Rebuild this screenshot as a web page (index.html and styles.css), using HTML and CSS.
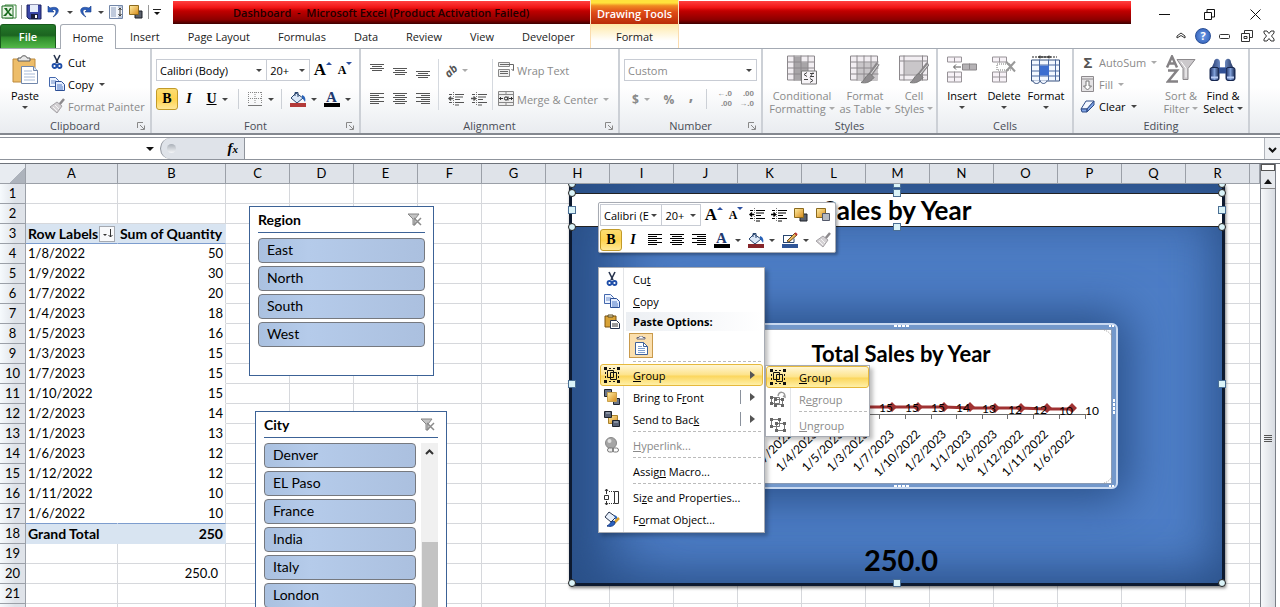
FILE: index.html
```html
<!DOCTYPE html>
<html lang="en">
<head>
    <meta charset="UTF-8">
    <meta name="viewport" content="width=device-width, initial-scale=1.0">
    <title>Dashboard - Microsoft Excel</title>
    <link rel="stylesheet" href="styles.css">
</head>
<body>
    <!-- Icon sprite -->
    <svg class="sprite" aria-hidden="true">
        <defs>
            <linearGradient id="gold" x1="0" y1="0" x2="1" y2="1"><stop offset="0" stop-color="#fff0a8"/><stop offset="1" stop-color="#d88a18"/></linearGradient>
            <linearGradient id="steel" x1="0" y1="0" x2="1" y2="0"><stop offset="0" stop-color="#1c2f66"/><stop offset=".5" stop-color="#7f9fd8"/><stop offset="1" stop-color="#16264f"/></linearGradient>
        </defs>
        <symbol id="i-excel" viewBox="0 0 16 16"><path d="M4 1h11v13H4z" fill="#fff" stroke="#3c8a3c"/><path d="M1 2h11v12H1z" fill="#e8f4e4" stroke="#1d6a22"/><path d="M3 4h3l1 3 2-3h2L8 8l4 4H9L7 9l-2 3H2l4-4z" fill="#176a1c"/></symbol>
        <symbol id="i-save" viewBox="0 0 16 16"><path d="M1 1h14v14H3l-2-2z" fill="#3b47a8" stroke="#1c2260"/><path d="M4 1h8v7H4z" fill="#e6ecfa"/><path d="M5 10h7v5H5z" fill="#191d3d"/><path d="M9 11h2v3H9z" fill="#fff"/></symbol>
        <symbol id="i-undo" viewBox="0 0 16 16"><path d="M2 2v6h6L6 6c4-2 6 2 1 7 8-4 7-12-3-9z" fill="#2c5fbd" stroke="#173d86" stroke-width=".6"/></symbol>
        <symbol id="i-redo" viewBox="0 0 16 16"><path d="M14 2v6H8l2-2c-4-2-6 2-1 7-8-4-7-12 3-9z" fill="#2c5fbd" stroke="#173d86" stroke-width=".6"/></symbol>
        <symbol id="i-ruler" viewBox="0 0 16 16"><path d="M1.500 1.500h13v13h-13z" fill="#f4f7fb" stroke="#7387a8"/><path d="M3 4h5M3 6h5M3 8h5M3 10h5M3 12h5M10 3h4M10 13h4" stroke="#8a9cbc"/><path d="M12 4v8M10.500 6L12 4l1.500 2M10.500 10l1.500 2 1.500-2" stroke="#333" fill="none"/></symbol>
        <symbol id="i-front" viewBox="0 0 16 16"><path d="M7 7h7v7H7z" fill="#5a606c" stroke="#1d2028"/><path d="M1.500 1.500h9v9h-9z" fill="url(#gold)" stroke="#8b6a1e"/></symbol>
        <symbol id="i-back" viewBox="0 0 16 16"><path d="M1.500 1.500h9v9h-9z" fill="url(#gold)" stroke="#8b6a1e"/><path d="M7.500 6.500h7v7h-7z" fill="#b5b9c1" stroke="#53596a"/></symbol>
        <symbol id="i-mfront" viewBox="0 0 16 16"><path d="M.5.5h7v7h-7zM9.500 9.500h6v6h-6z" fill="#6a7385" stroke="#1f242e"/><path d="M3.500 3.500h9v9h-9z" fill="url(#gold)" stroke="#c9a14a"/></symbol>
        <symbol id="i-mback" viewBox="0 0 16 16"><path d="M4.500 4.500h9v8h-9z" fill="url(#gold)" stroke="#a9812a"/><path d="M.5.5h7v6h-7zM8.500 9.500h7v6h-7z" fill="#596275" stroke="#1f242e"/><path d="M2 2h4M10 11h4" stroke="#b8c0cf"/></symbol>
        <symbol id="i-paste" viewBox="0 0 28 30"><path d="M2 4h22v23H2z" fill="#edbd6a" stroke="#bd8a3c"/><path d="M7 6V3h3c0-3 6-3 6 0h3v3z" fill="#e9e9e9" stroke="#5d5d5d"/><path d="M10.500 11.500h12l4 4v13h-16z" fill="#fff" stroke="#7187ab"/><path d="M22.500 11.500v4h4" fill="#dce6f4" stroke="#7187ab"/><path d="M13 16h8M13 19h11M13 22h11M13 25h11" stroke="#a8bbd8"/></symbol>
        <symbol id="i-cut" viewBox="0 0 16 16"><path d="M5 1l4 8M11 1L7 9" stroke="#26334d" stroke-width="1.600"/><circle cx="5.500" cy="12" r="2" fill="none" stroke="#1f4ea8" stroke-width="1.800"/><circle cx="10.500" cy="12" r="2" fill="none" stroke="#1f4ea8" stroke-width="1.800"/></symbol>
        <symbol id="i-copy" viewBox="0 0 16 16"><path d="M.5 1.500h6l3 3v6h-9z" fill="#eef4ff" stroke="#4468ad"/><path d="M2 5h5M2 7h5" stroke="#6f90cc"/><path d="M6.500 5.500h6l3 3v6h-9z" fill="#e4edff" stroke="#2c4f96"/><path d="M8 9h5M8 11h6M8 13h6" stroke="#4f78c4"/></symbol>
        <symbol id="i-brush" viewBox="0 0 16 16"><path d="M15 1l-5 6" stroke="#8d8a8d" stroke-width="2.500"/><path d="M8 4l5 4-5 7-7-6z" fill="#d4d1d4" stroke="#a5a2a6"/><path d="M4 9l4 4M6 7l4 4" stroke="#f4f4f4"/></symbol>
        <symbol id="i-border" viewBox="0 0 16 16"><path d="M1.500 1v12M8 1v12M14.500 1v12M1 1.500h14M1 7.500h14" stroke="#888" stroke-dasharray="1 1"/><path d="M1 14.500h14" stroke="#777"/></symbol>
        <symbol id="i-bucket" viewBox="0 0 16 12"><path d="M6 2l7 5-6 5-6-5z" fill="#dce8f8" stroke="#28456f"/><path d="M5 5V1.500h3V6" fill="none" stroke="#28456f"/><path d="M12 4c3 1 4 4 3 7-1-2-2-3-3-4z" fill="#2862b8"/></symbol>
        <symbol id="i-pen" viewBox="0 0 16 12"><path d="M1 3.500h10M1.500 3v8M1 10.500h11v-4" fill="none" stroke="#28456f"/><path d="M5 9L13 1l2 2-8 7z" fill="#e8b65a" stroke="#6a4a20"/><path d="M13 1l2 2" stroke="#b33" stroke-width="2"/></symbol>
        <symbol id="i-top" viewBox="0 0 16 16"><path d="M1 2.500h14M3 4.500h10M1 6.500h14M3 8.500h10" stroke="currentColor"/></symbol>
        <symbol id="i-mid" viewBox="0 0 16 16"><path d="M1 6.500h14M3 8.500h10M1 10.500h14M3 12.500h10" stroke="currentColor"/></symbol>
        <symbol id="i-bottom" viewBox="0 0 16 16"><path d="M1 9.500h14M3 11.500h10M1 13.500h14M3 15.500h10" stroke="currentColor"/></symbol>
        <symbol id="i-left" viewBox="0 0 16 16"><path d="M1 2.500h14M1 4.500h9M1 6.500h14M1 8.500h9M1 10.500h14M1 12.500h9" stroke="currentColor"/></symbol>
        <symbol id="i-center" viewBox="0 0 16 16"><path d="M1 2.500h14M3 4.500h10M1 6.500h14M3 8.500h10M1 10.500h14M3 12.500h10" stroke="currentColor"/></symbol>
        <symbol id="i-right" viewBox="0 0 16 16"><path d="M1 2.500h14M6 4.500h9M1 6.500h14M6 8.500h9M1 10.500h14M6 12.500h9" stroke="currentColor"/></symbol>
        <symbol id="i-outdent" viewBox="0 0 16 16"><path d="M1 3.500h3M7 3.500h9M7 6h8M7 8.500h5M1 11.500h3M7 11.500h9M7 14h4" stroke="currentColor"/><path d="M5.500 1v14" stroke="#777" stroke-dasharray="1 1"/><path d="M5 7.500H1M3 5.500l-2 2 2 2" fill="none" stroke="currentColor" stroke-width="1.500"/></symbol>
        <symbol id="i-indent" viewBox="0 0 16 16"><path d="M1 3.500h3M7 3.500h9M7 6h8M7 8.500h5M1 11.500h3M7 11.500h9M7 14h4" stroke="currentColor"/><path d="M5.500 1v14" stroke="#777" stroke-dasharray="1 1"/><path d="M0 7.500h4M2.500 5.500l2 2-2 2" fill="none" stroke="currentColor" stroke-width="1.500"/></symbol>
        <symbol id="i-wrap" viewBox="0 0 16 16"><path d="M.5.5h11v4H.5zM.5 7.500h11v7H.5z" fill="#eee" stroke="#888"/><path d="M2 2.500h13.500v6M2 9.500h8M2 11.500h8M13.500 7l2 2" fill="none" stroke="#666"/></symbol>
        <symbol id="i-merge" viewBox="0 0 16 16"><path d="M.5.500h15v14H.5zM.5 3.500h15M.5 11.500h15M8 0v4M8 12v3" fill="#eee" stroke="#888"/><path d="M1 7.500h4M11 7.500h4M3 6L1.500 7.500 3 9M13 6l1.500 1.500L13 9" fill="none" stroke="#333"/><circle cx="8" cy="7.500" r="1.600" fill="none" stroke="#222"/><path d="M10 5.500v4" stroke="#222"/></symbol>
        <symbol id="i-cond" viewBox="0 0 30 29"><path d="M.5.500h27v24H.5z" fill="#f2eef2" stroke="#8c888c"/><path d="M7 1h7v24H7zM14 7h7v11h-7z" fill="#a8a5a8"/><path d="M.5 6.500h27M.5 12.500h27M.5 18.500h27M7 0v25M14 0v25M21 0v25" stroke="#8c888c"/><path d="M14.500 15.500h15v13h-15z" fill="#f7f4f7" stroke="#777"/><path d="M20 17l-3 2 3 2M17 24h4M23 18h4M23 21h4M26 17l-3 5M23 23l3 2-3 2" fill="none" stroke="#444"/></symbol>
        <symbol id="i-ftable" viewBox="0 0 30 29"><path d="M.5.500h27v24H.5z" fill="#f2eef2" stroke="#8c888c"/><path d="M7 7h21v18H7z" fill="#c9c6c9"/><path d="M.5 6.500h28M.5 12.500h28M.5 18.500h28M7 0v25M14 0v25M21 0v25" stroke="#8c888c"/><path d="M28 8l-9 13" stroke="#8a878a" stroke-width="4"/><path d="M28 9l-9 12" stroke="#ddd"/><path d="M20 18l4 4c-4 5-8 6-13 5 4-2 4-7 9-9z" fill="#8f8c8f" stroke="#777"/></symbol>
        <symbol id="i-cstyle" viewBox="0 0 30 29"><path d="M.5.500h28v24H.5z" fill="#f2eef2" stroke="#8c888c"/><path d="M5 6h18v13H5z" fill="#c9c6c9"/><path d="M.5 5.500h28M.5 19.500h28M5 0v25M23.500 0v25" stroke="#8c888c"/><path d="M29 8L19 21" stroke="#8a878a" stroke-width="4"/><path d="M29 9L19 21" stroke="#ddd"/><path d="M20 18l4 4c-4 5-8 6-13 5 4-2 4-7 9-9z" fill="#8f8c8f" stroke="#777"/></symbol>
        <symbol id="i-insert" viewBox="0 0 30 29"><path d="M.5 1.500h14v5H.5zM7.500 2v5M.5 16.500h14v10H.5zM7.500 16v10M.5 21.500h14" fill="#f7f2f7" stroke="#979297"/><path d="M15.500 8.500h14v6h-14zM22.500 8v6" fill="#b5b2b5" stroke="#8a878a"/><path d="M14 11.500H7M9 9l-2.500 2.500L9 14" stroke="#555" fill="none"/></symbol>
        <symbol id="i-delete" viewBox="0 0 30 29"><path d="M3.500 1.500h14v5h-14zM10.500 2v5M3.500 16.500h14v10h-14zM10.500 16v10M3.500 21.500h14" fill="#f7f2f7" stroke="#979297"/><path d="M8 8.500h14v6H8z" fill="none" stroke="#777" stroke-dasharray="1 1"/><path d="M17 6l9 10M26 6l-9 10" stroke="#999" stroke-width="2"/></symbol>
        <symbol id="i-format" viewBox="0 0 30 29"><path d="M1 1.500h25" stroke="#222" stroke-dasharray="2 1"/><path d="M7 1.500h13M9 0v3M18 0v3" stroke="#222"/><path d="M.5 4.500h28v21H.5z" fill="#f3f8ff" stroke="#37517f"/><path d="M2 25c0 4 7 4 7 0 1 4 6 4 7 0" fill="#eef4ff" stroke="#37517f"/><path d="M.5 9.500h28M.5 15.500h28M.5 20.500h28M8.500 4v21M17.500 4v21M24.500 4v21" stroke="#4a69a0"/><path d="M9 10h9v10H9z" fill="#3c6ed0"/></symbol>
        <symbol id="i-fill" viewBox="0 0 16 16"><path d="M1.500.500h12v15h-12z" fill="#e5e3e5" stroke="#8e8b8e"/><path d="M1 3h12" stroke="#8e8b8e"/><path d="M6 5h3v5h2.500l-4 4-4-4H6z" fill="#fff" stroke="#777"/></symbol>
        <symbol id="i-eraser" viewBox="0 0 16 16"><path d="M6 3h8l-7 8H1z" fill="#f3f7ff" stroke="#304d87"/><path d="M1 11h6v3H2zM7 11l7-8v4l-7 7z" fill="#7ea3e6" stroke="#304d87"/></symbol>
        <symbol id="i-sort" viewBox="0 0 30 29"><path d="M1 12L6 1l5 11M3 8h6M2 15h9L2 26h10" fill="none" stroke="#858285" stroke-width="2.500"/><path d="M11 4h18l-7 9v11h-5V13z" fill="#cbc8cb" stroke="#8b888b"/><path d="M15 6l5 7v9" fill="none" stroke="#fff"/></symbol>
        <symbol id="i-find" viewBox="0 0 30 29"><path d="M6 7c0-5 6-5 6 0v5h5V7c0-5 6-5 6 0l4 9H2z" fill="url(#steel)"/><rect x="2" y="12" width="9" height="13" rx="2" fill="url(#steel)" stroke="#16264f"/><rect x="18" y="12" width="9" height="13" rx="2" fill="url(#steel)" stroke="#16264f"/><path d="M11 12h7v6h-7z" fill="#304f94"/><path d="M3 22h7M19 22h7" stroke="#b8ccf5" stroke-width="2"/></symbol>
        <symbol id="i-launch" viewBox="0 0 8 8"><path d="M.5 6V.500H6M3 3l4 4M7.500 3.500v4h-4" fill="none" stroke="currentColor"/></symbol>
        <symbol id="i-clear" viewBox="0 0 16 14"><path d="M1 1h11L8 6v6H6V6z" fill="#c4c4c4" stroke="#858585"/><path d="M7 5l7 7M14 5l-7 7" stroke="#8b8b8b" stroke-width="1.500"/></symbol>
        <symbol id="i-group" viewBox="0 0 16 16"><path d="M3.500 3.500h6v7h-6zM6.500 5.500h6v7h-6z" fill="none" stroke="#111"/><path d="M0 0h3v3H0zM13 0h3v3h-3zM0 13h3v3H0zM13 13h3v3h-3z" fill="#111"/><path d="M5 1.500h2M9 1.500h2M5 14.500h2M9 14.500h2M1.500 5v2M1.500 9v2M14.500 5v2M14.500 9v2" stroke="#111"/></symbol>
        <symbol id="i-ungroup" viewBox="0 0 16 16"><path d="M1.500 2.500h8v7h-8zM6.500 6.500h8v7h-8z" fill="none" stroke="#777"/><path d="M0 1h3v3H0zM8 1h3v3H8zM0 8h3v3H0zM5 5h3v3H5zM13 5h3v3h-3zM5 12h3v3H5zM13 12h3v3h-3z" fill="#666"/></symbol>
        <symbol id="i-regroup" viewBox="0 0 16 16"><path d="M1.500 6.500h8v6h-8zM4.500 8.500h8v5h-8z" fill="none" stroke="#777"/><path d="M0 5h3v3H0zM0 11h3v3H0zM4 7h3v3H4zM11 7h3v3h-3zM4 13h3v3H4zM11 13h3v3h-3z" fill="#666"/><path d="M8 5c1-5 7-5 7 1l-2-1" fill="none" stroke="#999" stroke-width="1.500"/></symbol>
        <symbol id="i-link" viewBox="0 0 16 16"><circle cx="7" cy="6" r="5.500" fill="#a5a5a5" stroke="#888"/><circle cx="5.500" cy="4" r="2" fill="#e0e0e0"/><rect x="3.500" y="11" width="6" height="4" rx="2" fill="#eee" stroke="#777"/><rect x="8.500" y="11" width="6" height="4" rx="2" fill="none" stroke="#777"/></symbol>
        <symbol id="i-size" viewBox="0 0 16 16"><path d="M10.500 2.500h4v12h-4z" fill="#fff" stroke="#333"/><path d="M.5 6.500h4v4h-4z" fill="none" stroke="#333"/><path d="M2.500 0v5M2.500 12v4M1 2l1.500-2L4 2M1 14l1.500 2L4 14" stroke="#333" fill="none"/><path d="M5 2.500h5M5 14.500h5" stroke="#333" stroke-dasharray="1 1"/></symbol>
        <symbol id="i-fobj" viewBox="0 0 16 16"><path d="M5 1l7 5-5 5-6-5z" fill="#e8f0fb" stroke="#26334d"/><path d="M10 4c4 1 4 4 2 6z" fill="#2862b8"/><path d="M15 7l-5 5" stroke="#d9a02b" stroke-width="2.500"/><path d="M11 11c0 4-4 5-8 4 3-1 3-4 6-5z" fill="#2c62c0" stroke="#173d86"/></symbol>
        <symbol id="i-mpaste" viewBox="0 0 16 16"><path d="M1 2h11v11H1z" fill="#d9a336" stroke="#7a5310"/><path d="M4 3V1h5v2z" fill="#f4e8c8" stroke="#5b4a1e"/><path d="M6.500 6.500h6l3 3v5h-9z" fill="#fff" stroke="#26334d"/><path d="M8 10h6M8 12h6" stroke="#333"/></symbol>
    </svg>

    <div class="window">
        <header class="top-bar">
            <div class="title-left">
                <div class="quick-access">
                    <svg class="icon"><use href="#i-excel"/></svg>
                    <i class="quick-line"></i>
                    <button class="tool" aria-label="Save"><svg class="icon"><use href="#i-save"/></svg></button>
                    <button class="tool" aria-label="Undo"><svg class="icon"><use href="#i-undo"/></svg><i class="caret"></i></button>
                    <button class="tool" aria-label="Redo"><svg class="icon"><use href="#i-redo"/></svg><i class="caret"></i></button>
                    <button class="tool" aria-label="Row height"><svg class="icon"><use href="#i-ruler"/></svg></button>
                    <button class="tool" aria-label="Bring to front"><svg class="icon"><use href="#i-front"/></svg></button>
                    <i class="quick-line"></i>
                    <button class="customize" aria-label="Customize toolbar"><i class="caret"></i></button>
                </div>
                <div class="title-text">Dashboard&nbsp; -&nbsp; Microsoft Excel (Product Activation Failed)</div>
            </div>
            <div class="context-title">Drawing Tools</div>
            <div class="title-right">
                <div class="title-fill"></div>
                <div class="window-buttons">
                    <button class="tool" aria-label="Minimize"><svg width="11" height="11"><path d="M0 5.500h11" stroke="#111"/></svg></button>
                    <button class="tool" aria-label="Restore"><svg width="11" height="11"><path d="M.5 3.500h7v7h-7zM3 3V.500h7.500V8H8" fill="none" stroke="#111"/></svg></button>
                    <button class="tool" aria-label="Close"><svg width="11" height="11"><path d="M.5.500l10 10M10.500.500l-10 10" stroke="#111"/></svg></button>
                </div>
            </div>
        </header>

        <nav class="tab-bar">
            <div class="tabs">
                <button class="tab file-tab">File</button>
                <button class="tab active">Home</button>
                <button class="tab">Insert</button>
                <button class="tab">Page Layout</button>
                <button class="tab">Formulas</button>
                <button class="tab">Data</button>
                <button class="tab">Review</button>
                <button class="tab">View</button>
                <button class="tab">Developer</button>
            </div>
            <button class="tab context-tab">Format</button>
            <div class="doc-buttons">
                <button class="tool" aria-label="Collapse ribbon"><svg width="10" height="8"><path d="M1 4l4-3 4 3v2L5 3.500 1 6z" fill="#fff" stroke="#333"/></svg></button>
                <button class="help" aria-label="Help">?</button>
                <button class="tool" aria-label="Minimize workbook"><svg width="12" height="12"><rect x=".5" y="4.500" width="10" height="4" rx="1" fill="#fff" stroke="#333"/></svg></button>
                <button class="tool" aria-label="Restore workbook"><svg width="12" height="12"><path d="M3.500 3V.500h8v7H9M.5 3.500h8v8h-8zM3 6.500h3v2H3z" fill="none" stroke="#333"/></svg></button>
                <button class="tool" aria-label="Close workbook"><svg width="12" height="12"><path d="M1 1h3l2 2.500L8 1h3v2L8.500 6 11 9v2H8L6 8.500 4 11H1V9l2.500-3L1 3z" fill="#fff" stroke="#333"/></svg></button>
            </div>
        </nav>

        <div class="ribbon">
            <section class="group clipboard">
                <div class="group-body">
                    <button class="big"><svg class="icon-big"><use href="#i-paste"/></svg>Paste<i class="caret"></i></button>
                    <div class="stack">
                        <button class="item"><svg class="icon"><use href="#i-cut"/></svg>Cut</button>
                        <button class="item"><svg class="icon"><use href="#i-copy"/></svg>Copy<i class="caret"></i></button>
                        <button class="item" disabled><svg class="icon"><use href="#i-brush"/></svg>Format Painter</button>
                    </div>
                </div>
                <footer class="group-label">Clipboard<svg class="launch"><use href="#i-launch"/></svg></footer>
            </section>

            <section class="group font">
                <div class="group-body rows">
                    <div class="row">
                        <label class="combo combo-font"><select aria-label="Font"><option>Calibri (Body)</option></select></label>
                        <label class="combo combo-size"><select aria-label="Font size"><option>20+</option></select></label>
                        <button class="tool letter grow" aria-label="Grow font">A</button>
                        <button class="tool letter shrink" aria-label="Shrink font">A</button>
                    </div>
                    <div class="row">
                        <button class="tool letter pressed">B</button>
                        <button class="tool letter italic">I</button>
                        <button class="tool letter drop"><u>U</u><i class="caret"></i></button>
                        <i class="line"></i>
                        <button class="tool drop" aria-label="Borders"><svg class="icon"><use href="#i-border"/></svg><i class="caret"></i></button>
                        <i class="line"></i>
                        <button class="tool drop" aria-label="Fill color"><span class="swatch red"><svg><use href="#i-bucket"/></svg></span><i class="caret"></i></button>
                        <button class="tool drop" aria-label="Font color"><span class="swatch black">A</span><i class="caret"></i></button>
                    </div>
                </div>
                <footer class="group-label">Font<svg class="launch"><use href="#i-launch"/></svg></footer>
            </section>

            <section class="group alignment">
                <div class="group-body align-grid">
                    <div class="rows">
                        <div class="row">
                            <button class="tool" aria-label="Top align"><svg class="icon"><use href="#i-top"/></svg></button>
                            <button class="tool" aria-label="Middle align"><svg class="icon"><use href="#i-mid"/></svg></button>
                            <button class="tool" aria-label="Bottom align"><svg class="icon"><use href="#i-bottom"/></svg></button>
                        </div>
                        <div class="row">
                            <button class="tool" aria-label="Align left"><svg class="icon"><use href="#i-left"/></svg></button>
                            <button class="tool" aria-label="Center"><svg class="icon"><use href="#i-center"/></svg></button>
                            <button class="tool" aria-label="Align right"><svg class="icon"><use href="#i-right"/></svg></button>
                        </div>
                    </div>
                    <div class="rows split">
                        <div class="row">
                            <button class="tool" aria-label="Orientation" disabled><span class="orient">ab</span><i class="caret"></i></button>
                        </div>
                        <div class="row">
                            <button class="tool" aria-label="Decrease indent"><svg class="icon"><use href="#i-outdent"/></svg></button>
                            <button class="tool" aria-label="Increase indent"><svg class="icon"><use href="#i-indent"/></svg></button>
                        </div>
                    </div>
                    <div class="rows split">
                        <div class="row"><button class="item" disabled><svg class="icon"><use href="#i-wrap"/></svg>Wrap Text</button></div>
                        <div class="row"><button class="item" disabled><svg class="icon"><use href="#i-merge"/></svg>Merge &amp; Center<i class="caret"></i></button></div>
                    </div>
                </div>
                <footer class="group-label">Alignment<svg class="launch"><use href="#i-launch"/></svg></footer>
            </section>

            <section class="group number">
                <div class="group-body rows">
                    <div class="row">
                        <label class="combo combo-number"><select aria-label="Number format" disabled><option>Custom</option></select></label>
                    </div>
                    <div class="row">
                        <button class="tool sign drop" disabled>$<i class="caret"></i></button>
                        <button class="tool sign" disabled>%</button>
                        <button class="tool sign comma" disabled>,</button>
                        <i class="line"></i>
                        <button class="tool decimals" disabled><span>←.0</span><span>.00</span></button>
                        <button class="tool decimals" disabled><span>.00</span><span>→.0</span></button>
                    </div>
                </div>
                <footer class="group-label">Number<svg class="launch"><use href="#i-launch"/></svg></footer>
            </section>

            <section class="group styles">
                <div class="group-body">
                    <button class="big wide" disabled><svg class="icon-big"><use href="#i-cond"/></svg>Conditional<span>Formatting<i class="caret"></i></span></button>
                    <button class="big medium" disabled><svg class="icon-big"><use href="#i-ftable"/></svg>Format<span>as Table<i class="caret"></i></span></button>
                    <button class="big" disabled><svg class="icon-big"><use href="#i-cstyle"/></svg>Cell<span>Styles<i class="caret"></i></span></button>
                </div>
                <footer class="group-label">Styles</footer>
            </section>

            <section class="group cells">
                <div class="group-body">
                    <button class="big"><svg class="icon-big"><use href="#i-insert"/></svg>Insert<i class="caret"></i></button>
                    <button class="big"><svg class="icon-big"><use href="#i-delete"/></svg>Delete<i class="caret"></i></button>
                    <button class="big"><svg class="icon-big"><use href="#i-format"/></svg>Format<i class="caret"></i></button>
                </div>
                <footer class="group-label">Cells</footer>
            </section>

            <section class="group editing">
                <div class="group-body">
                    <div class="stack">
                        <button class="item" disabled><span class="sigma">Σ</span>AutoSum<i class="caret"></i></button>
                        <button class="item" disabled><svg class="icon"><use href="#i-fill"/></svg>Fill<i class="caret"></i></button>
                        <button class="item"><svg class="icon"><use href="#i-eraser"/></svg>Clear<i class="caret"></i></button>
                    </div>
                    <button class="big" disabled><svg class="icon-big"><use href="#i-sort"/></svg>Sort &amp;<span>Filter<i class="caret"></i></span></button>
                    <button class="big"><svg class="icon-big"><use href="#i-find"/></svg>Find &amp;<span>Select<i class="caret"></i></span></button>
                </div>
                <footer class="group-label">Editing</footer>
            </section>
        </div>

        <div class="formula-bar">
            <label class="name-box"><input type="text" aria-label="Name box"></label>
            <button class="fx" aria-label="Insert function"><i class="knob"></i><span>f<small>x</small></span></button>
            <input class="formula" type="text" aria-label="Formula">
            <button class="expand" aria-label="Expand formula bar"><svg width="9" height="6"><path d="M1 1l3.500 3.500L8 1" fill="none" stroke="#111" stroke-width="2"/></svg></button>
        </div>

        <main class="workspace">
            <div class="canvas">
                <table class="sheet">
                    <colgroup>
                        <col class="col-head"><col class="col-a"><col class="col-b">
                        <col span="16" class="col-std"><col>
                    </colgroup>
                    <thead>
                        <tr><th class="corner"></th><th>A</th><th>B</th><th>C</th><th>D</th><th>E</th><th>F</th><th>G</th><th>H</th><th>I</th><th>J</th><th>K</th><th>L</th><th>M</th><th>N</th><th>O</th><th>P</th><th>Q</th><th>R</th><th></th></tr>
                    </thead>
                    <tbody>
                        <tr><th>1</th><td></td><td></td><td class="rest" colspan="17"></td></tr>
                        <tr><th>2</th><td></td><td></td><td class="rest" colspan="17"></td></tr>
                        <tr class="pivot-head"><th>3</th><td><div class="label-cell">Row Labels<button class="sort" aria-label="Sort row labels"><svg width="11" height="9"><path d="M1 5h4L3 7z" fill="#333"/><path d="M8.500 0v8M6.500 6l2 2 2-2" fill="none" stroke="#333"/></svg></button></div></td><td>Sum of Quantity</td><td class="rest" colspan="17"></td></tr>
                        <tr class="pivot"><th>4</th><td>1/8/2022</td><td>50</td><td class="rest" colspan="17"></td></tr>
                        <tr class="pivot"><th>5</th><td>1/9/2022</td><td>30</td><td class="rest" colspan="17"></td></tr>
                        <tr class="pivot"><th>6</th><td>1/7/2022</td><td>20</td><td class="rest" colspan="17"></td></tr>
                        <tr class="pivot"><th>7</th><td>1/4/2023</td><td>18</td><td class="rest" colspan="17"></td></tr>
                        <tr class="pivot"><th>8</th><td>1/5/2023</td><td>16</td><td class="rest" colspan="17"></td></tr>
                        <tr class="pivot"><th>9</th><td>1/3/2023</td><td>15</td><td class="rest" colspan="17"></td></tr>
                        <tr class="pivot"><th>10</th><td>1/7/2023</td><td>15</td><td class="rest" colspan="17"></td></tr>
                        <tr class="pivot"><th>11</th><td>1/10/2022</td><td>15</td><td class="rest" colspan="17"></td></tr>
                        <tr class="pivot"><th>12</th><td>1/2/2023</td><td>14</td><td class="rest" colspan="17"></td></tr>
                        <tr class="pivot"><th>13</th><td>1/1/2023</td><td>13</td><td class="rest" colspan="17"></td></tr>
                        <tr class="pivot"><th>14</th><td>1/6/2023</td><td>12</td><td class="rest" colspan="17"></td></tr>
                        <tr class="pivot"><th>15</th><td>1/12/2022</td><td>12</td><td class="rest" colspan="17"></td></tr>
                        <tr class="pivot"><th>16</th><td>1/11/2022</td><td>10</td><td class="rest" colspan="17"></td></tr>
                        <tr class="pivot last"><th>17</th><td>1/6/2022</td><td>10</td><td class="rest" colspan="17"></td></tr>
                        <tr class="pivot total"><th>18</th><td>Grand Total</td><td>250</td><td class="rest" colspan="17"></td></tr>
                        <tr><th>19</th><td></td><td></td><td class="rest" colspan="17"></td></tr>
                        <tr><th>20</th><td></td><td class="indented">250.0</td><td class="rest" colspan="17"></td></tr>
                        <tr><th>21</th><td></td><td></td><td class="rest" colspan="17"></td></tr>
                        <tr><th></th><td></td><td></td><td class="rest" colspan="17"></td></tr>
                    </tbody>
                </table>

                <section class="slicer region">
                    <h2>Region<svg><use href="#i-clear"/></svg></h2>
                    <div class="slicer-list">
                        <button>East</button>
                        <button>North</button>
                        <button>South</button>
                        <button>West</button>
                    </div>
                </section>

                <section class="slicer city">
                    <h2>City<svg><use href="#i-clear"/></svg></h2>
                    <div class="slicer-scroll">
                        <div class="slicer-list">
                            <button>Denver</button>
                            <button>EL Paso</button>
                            <button>France</button>
                            <button>India</button>
                            <button>Italy</button>
                            <button>London</button>
                        </div>
                        <div class="slicer-bar">
                            <svg width="9" height="6"><path d="M1 5l3.500-3.500L8 5" fill="none" stroke="#333" stroke-width="2"/></svg>
                            <div class="slicer-thumb"></div>
                        </div>
                    </div>
                </section>

                <section class="dashboard">
                    <h1 class="dash-title">Sales by Year</h1>
                    <div class="chart">
                        <svg viewBox="684 323 434 166" width="434" height="166">
                            <rect x="685" y="324" width="432" height="164" rx="5" fill="#7398cb" stroke="#c9d9f0" stroke-width="2"/>
                            <rect x="689.500" y="329.500" width="422" height="154" fill="#fff" stroke="#8a9bb5"/>
                            <path d="M1104 330q7 2 8 8M1104 483q7-2 8-8" fill="none" stroke="#999" stroke-dasharray="1 1"/>
                            <path d="M894 326h15M894 486h15" stroke="#fff" stroke-width="2" stroke-dasharray="3 1"/>
                            <path d="M1114 399v15" stroke="#fff" stroke-width="2" stroke-dasharray="3 1"/>
                            <path d="M1109 326h6M1109 486h6" stroke="#fff" stroke-width="2" stroke-dasharray="2 1"/>
                            <text class="chart-title" x="901" y="362" text-anchor="middle">Total Sales by Year</text>
                            <path d="M725 414.500h360M879.500 414v5M905.500 414v5M931.500 414v5M956.500 414v5M982.500 414v5M1007.500 414v5M1033.500 414v5M1059.500 414v5M1085.500 414v5" stroke="#6d6d6d" fill="none"/>
                            <path d="M738 388l25 11 26 5 26 1 26 1 26 1h77l26 1 24 0 26 0 26 1 27 0" fill="none" stroke="#a03232" stroke-width="3"/>
                            <path d="M892 402l5 5-5 5-5-5zM918 402l5 5-5 5-5-5zM944 402l5 5-5 5-5-5zM970 402l5 5-5 5-5-5zM995 403l5 5-5 5-5-5zM1021 403l5 5-5 5-5-5zM1047 403l5 5-5 5-5-5zM1072 403l5 5-5 5-5-5z" fill="#a03232"/>
                            <g class="chart-values">
                                <text x="886" y="412">15</text><text x="912" y="412">15</text><text x="938" y="412">15</text><text x="963" y="412">14</text><text x="989" y="413">13</text><text x="1015" y="414">12</text><text x="1040" y="414">12</text><text x="1066" y="415">10</text><text x="1092" y="415">10</text>
                            </g>
                            <g class="chart-labels">
                                <text transform="translate(793 435) rotate(-45)">1/7/2022</text>
                                <text transform="translate(818 435) rotate(-45)">1/4/2023</text>
                                <text transform="translate(844 435) rotate(-45)">1/5/2023</text>
                                <text transform="translate(869 435) rotate(-45)">1/3/2023</text>
                                <text transform="translate(895 435) rotate(-45)">1/7/2023</text>
                                <text transform="translate(921 435) rotate(-45)">1/10/2022</text>
                                <text transform="translate(947 435) rotate(-45)">1/2/2023</text>
                                <text transform="translate(972 435) rotate(-45)">1/1/2023</text>
                                <text transform="translate(998 435) rotate(-45)">1/6/2023</text>
                                <text transform="translate(1024 435) rotate(-45)">1/12/2022</text>
                                <text transform="translate(1049 435) rotate(-45)">1/11/2022</text>
                                <text transform="translate(1075 435) rotate(-45)">1/6/2022</text>
                            </g>
                        </svg>
                    </div>
                    <div class="dash-total">250.0</div>
                    <i class="handle round top left"></i>
                    <i class="handle top middle"></i>
                    <i class="handle round top right"></i>
                    <i class="handle round title-top left"></i>
                    <i class="handle title-top middle"></i>
                    <i class="handle round title-top right"></i>
                    <i class="handle title-mid left"></i>
                    <i class="handle title-mid right"></i>
                    <i class="handle round title-end left"></i>
                    <i class="handle title-end middle"></i>
                    <i class="handle round title-end right"></i>
                    <i class="handle center left"></i>
                    <i class="handle center right"></i>
                    <i class="handle round bottom left"></i>
                    <i class="handle bottom middle"></i>
                    <i class="handle round bottom right"></i>
                </section>

                <div class="mini-toolbar">
                    <div class="row">
                        <label class="combo mini-font"><select aria-label="Mini toolbar font"><option>Calibri (E</option></select></label>
                        <label class="combo mini-size"><select aria-label="Mini toolbar size"><option>20+</option></select></label>
                        <button class="tool letter grow" aria-label="Grow font">A</button>
                        <button class="tool letter shrink" aria-label="Shrink font">A</button>
                        <button class="tool" aria-label="Decrease indent"><svg class="icon"><use href="#i-outdent"/></svg></button>
                        <button class="tool" aria-label="Increase indent"><svg class="icon"><use href="#i-indent"/></svg></button>
                        <button class="tool" aria-label="Bring forward"><svg class="icon"><use href="#i-front"/></svg></button>
                        <button class="tool" aria-label="Send backward"><svg class="icon"><use href="#i-back"/></svg></button>
                    </div>
                    <div class="row">
                        <button class="tool letter pressed">B</button>
                        <button class="tool letter italic">I</button>
                        <button class="tool" aria-label="Align left"><svg class="icon"><use href="#i-left"/></svg></button>
                        <button class="tool" aria-label="Center"><svg class="icon"><use href="#i-center"/></svg></button>
                        <button class="tool" aria-label="Align right"><svg class="icon"><use href="#i-right"/></svg></button>
                        <button class="tool drop" aria-label="Font color"><span class="swatch black">A</span><i class="caret"></i></button>
                        <button class="tool drop" aria-label="Shape fill"><span class="swatch maroon"><svg><use href="#i-bucket"/></svg></span><i class="caret"></i></button>
                        <button class="tool drop" aria-label="Shape outline"><span class="swatch blue"><svg><use href="#i-pen"/></svg></span><i class="caret"></i></button>
                        <button class="tool" aria-label="Format painter"><svg class="icon"><use href="#i-brush"/></svg></button>
                    </div>
                </div>

                <div class="menu context-menu">
                    <button><svg class="icon"><use href="#i-cut"/></svg><span>Cu<u>t</u></span></button>
                    <button><svg class="icon"><use href="#i-copy"/></svg><span><u>C</u>opy</span></button>
                    <div class="menu-head"><svg class="icon"><use href="#i-mpaste"/></svg><span>Paste Options:</span></div>
                    <div class="paste-row"><button class="paste-option" aria-label="Keep source formatting"><svg width="16" height="20"><path d="M4 3V1.500h2c0-2 4-2 4 0h2V3z" fill="#fff" stroke="#667"/><path d="M2.500 6.500h8l4 4v8h-12z" fill="#fff" stroke="#41639c"/><path d="M10.500 6.500v4h4" fill="none" stroke="#41639c"/><path d="M5 10.500h4M5 12.500h7M5 14.500h7M5 16.500h7" stroke="#7f9fd0"/></svg></button></div>
                    <hr>
                    <button class="hot"><svg class="icon"><use href="#i-group"/></svg><span><u>G</u>roup</span><i class="arrow"></i></button>
                    <button><svg class="icon"><use href="#i-mfront"/></svg><span>Bring to F<u>r</u>ont</span><i class="arrow split-arrow"></i></button>
                    <button><svg class="icon"><use href="#i-mback"/></svg><span>Send to Bac<u>k</u></span><i class="arrow split-arrow"></i></button>
                    <hr>
                    <button disabled><svg class="icon"><use href="#i-link"/></svg><span><u>H</u>yperlink...</span></button>
                    <hr>
                    <button><i class="icon"></i><span>Assig<u>n</u> Macro...</span></button>
                    <hr>
                    <button><svg class="icon"><use href="#i-size"/></svg><span>Si<u>z</u>e and Properties...</span></button>
                    <button><svg class="icon"><use href="#i-fobj"/></svg><span>F<u>o</u>rmat Object...</span></button>
                </div>

                <div class="menu sub-menu">
                    <button class="hot"><svg class="icon"><use href="#i-group"/></svg><span><u>G</u>roup</span></button>
                    <button disabled><svg class="icon"><use href="#i-regroup"/></svg><span>R<u>e</u>group</span></button>
                    <hr>
                    <button disabled><svg class="icon"><use href="#i-ungroup"/></svg><span><u>U</u>ngroup</span></button>
                </div>
            </div>

            <div class="scrollbar">
                <div class="split-box"></div>
                <button class="scroll-up" aria-label="Scroll up"></button>
                <div class="scroll-thumb"><i></i></div>
            </div>
        </main>
    </div>
</body>
</html>
```

FILE: styles.css
```css
* {
    margin: 0;
    padding: 0;
    box-sizing: border-box;
}

body {
    font-family: "Open Sans", "Noto Sans", sans-serif;
    font-size: 11px;
    color: black;
    background-color: white;
    height: 100vh;
    overflow: hidden;
}

button, input, select {
    font: inherit;
    color: inherit;
    background: none;
    border: none;
}

button:disabled {
    color: #8a8a8a;
}

i {
    font-style: normal;
}

.sprite {
    display: block;
    width: 0;
    height: 0;
}

.window {
    display: flex;
    flex-direction: column;
    height: 100vh;
}

.icon {
    width: 16px;
    height: 16px;
    flex: none;
}

.caret {
    flex: none;
    border: 3px solid transparent;
    border-top-color: #444;
    border-bottom: none;
}

:disabled .caret {
    border-top-color: #aaa;
}

.tool {
    display: flex;
    align-items: center;
    justify-content: center;
    gap: 5px;
    height: 22px;
    min-width: 22px;
}

.drop {
    width: 34px;
}

/* Title bar */
.top-bar,
.tab-bar {
    display: grid;
    grid-template-columns: 590px 89px 1fr;
    flex: none;
}

.top-bar {
    grid-template-rows: 24px;
}

.title-left,
.title-right,
.quick-access,
.window-buttons {
    display: flex;
    align-items: center;
}

.quick-access {
    width: 173px;
    gap: 4px;
    padding-left: 1px;
}

.quick-access .tool {
    min-width: 16px;
}

.quick-line {
    width: 1px;
    height: 14px;
    background-color: #999;
}

.customize {
    width: 8px;
    padding-top: 2px;
    border-top: 1px solid #222;
}

.customize .caret {
    display: block;
    margin: 0 1px;
    border-top-color: #111;
}

.title-text,
.title-fill {
    flex: 1;
    height: 23px;
    margin-top: 1px;
    background: linear-gradient(#ff4040, #f01414 30%, #c00000 45%, #8c0000 85%, #500000);
    border-bottom: 1px solid #400;
}

.title-text {
    padding-left: 60px;
    font-size: 11px;
    font-weight: 600;
    line-height: 24px;
    white-space: nowrap;
    color: #200000;
}

.context-title {
    background: linear-gradient(#ffe23c 12%, #f08a22 24%, #e04c18 50%, #b82c08);
    border: solid #fbe3c0;
    border-width: 0 1px;
    padding-top: 4px;
    color: white;
    font-weight: 600;
    font-size: 11px;
    line-height: 20px;
    text-align: center;
}

.window-buttons {
    width: 149px;
    height: 24px;
    padding: 4px 14px 0 22px;
    justify-content: space-between;
}

/* Tabs */
.tab-bar {
    height: 25px;
    border-bottom: 1px solid #a4aab3;
}

.tabs {
    display: flex;
    align-items: flex-end;
}

.tab {
    height: 24px;
    padding: 0 14px;
    color: #222;
}

.file-tab {
    width: 56px;
    margin-right: 4px;
    background: linear-gradient(#247a2a, #1c6420 45%, #2f8c2c 55%, #52b848);
    border: 1px solid #185a1c;
    border-bottom: none;
    border-radius: 3px 3px 0 0;
    color: white;
    font-weight: 600;
}

.tab.active {
    width: 56px;
    height: 25px;
    padding: 0;
    margin-bottom: -1px;
    background-color: white;
    border: 1px solid #a4aab3;
    border-bottom: none;
    border-radius: 3px 3px 0 0;
    position: relative;
}

.context-tab {
    background: linear-gradient(#ffe9a8, #fff 70%);
    border: solid #fbdcae;
    border-width: 0 1px;
}

.doc-buttons {
    display: flex;
    align-items: center;
    justify-content: flex-end;
}

.help {
    width: 16px;
    height: 16px;
    margin: 0 3px;
    border: 1px solid #2a4f96;
    border-radius: 50%;
    background: radial-gradient(#6f9be6, #2859b4);
    color: white;
    font-weight: bold;
    line-height: 14px;
}

/* Ribbon */
.ribbon {
    display: flex;
    flex: none;
    height: 86px;
    background: linear-gradient(white 45%, #e9ecf0);
    border-bottom: 2px solid #84888f;
}

.group {
    display: flex;
    flex-direction: column;
    flex: none;
    border-right: 2px solid #ccd0d6;
}

.group-body {
    display: flex;
    flex: 1;
    padding-top: 2px;
}

.group-label {
    display: flex;
    justify-content: center;
    align-items: center;
    height: 16px;
    color: #484c55;
    position: relative;
}

.launch {
    position: absolute;
    right: 5px;
    bottom: 3px;
    width: 8px;
    height: 8px;
    color: #888;
}

.clipboard { width: 152px; }
.font { width: 209px; }
.alignment { width: 259px; }
.number { width: 143px; }
.styles { width: 175px; }
.cells { width: 136px; }
.editing { width: 176px; }

.big {
    display: flex;
    flex-direction: column;
    align-items: center;
    width: 42px;
    padding-top: 4px;
    line-height: 13px;
    white-space: nowrap;
}

.big > .caret {
    margin-top: 4px;
}

.big span {
    display: flex;
    align-items: center;
    gap: 3px;
}

.wide { width: 70px; }
.medium { width: 56px; }

.icon-big {
    width: 30px;
    height: 30px;
    margin-bottom: 4px;
}

.stack .item {
    height: 22px;
}

.item {
    display: flex;
    align-items: center;
    gap: 3px;
    white-space: nowrap;
}

.clipboard .group-body { padding-left: 4px; }
.clipboard .stack { padding-left: 3px; }
.styles .group-body { padding-left: 4px; }
.cells .group-body { padding-left: 3px; }
.editing .group-body { padding-left: 6px; }
.editing .stack { width: 80px; }
.item .caret { margin-left: 2px; }

.rows {
    display: flex;
    flex-direction: column;
    gap: 7px;
}

.group-body.rows,
.align-grid {
    padding: 10px 4px 0;
}

.row {
    display: flex;
    align-items: center;
    height: 22px;
}

.alignment .row .tool {
    min-width: 23px;
    color: #555;
}

.split {
    margin-left: 4px;
    padding-left: 5px;
    border-left: 1px solid #d5d9df;
    height: 51px;
}

.split + .split {
    margin-left: 2px;
}

.orient {
    font-style: italic;
    font-weight: bold;
    transform: rotate(-45deg);
}

.line {
    width: 1px;
    height: 20px;
    margin: 0 4px;
    background-color: #ccd0d6;
}

.combo {
    position: relative;
    height: 22px;
    border: 1px solid #c8ccd4;
    background-color: white;
}

.combo select {
    appearance: none;
    display: block;
    width: 100%;
    height: 20px;
    padding: 0 0 0 3px;
}

.combo select:disabled {
    color: #8a8a8a;
    opacity: 1;
}

.combo::after {
    content: "";
    position: absolute;
    right: 4px;
    top: 9px;
    border: 3px solid transparent;
    border-top-color: #444;
    border-bottom: none;
}

.combo-font { width: 112px; }
.combo-size { width: 44px; margin-left: -1px; }
.combo-number { width: 134px; }

.letter {
    font-family: "Liberation Serif", serif;
    font-size: 14px;
    font-weight: bold;
}

.letter.italic {
    font-style: italic;
}

.pressed {
    border: 1px solid #c29b29;
    border-radius: 3px;
    background: linear-gradient(#fbdc72, #ffd34d 50%, #ffe897);
}

.grow {
    font-size: 17px;
    margin-left: 1px;
}

.shrink {
    font-size: 12px;
}

.grow,
.shrink {
    gap: 0;
    padding-left: 2px;
}

.grow::after,
.shrink::after {
    content: "";
    align-self: flex-start;
    margin-top: 3px;
    border: 3px solid transparent;
    border-bottom-color: #2a4fa0;
    border-top: none;
}

.shrink::after {
    border: 3px solid transparent;
    border-top-color: #2a4fa0;
    border-bottom: none;
}

.swatch {
    display: flex;
    flex-direction: column;
    align-items: center;
    width: 16px;
    height: 16px;
    border-bottom: 4px solid black;
    font-family: "Liberation Serif", serif;
    font-size: 15px;
    font-weight: bold;
    line-height: 12px;
    color: #1f3a70;
}

.swatch svg {
    width: 16px;
    height: 12px;
}

.red { border-color: #b33a3a; }
.maroon { border-color: #86252a; }
.blue { border-color: #2f5597; }

.sign {
    font-weight: bold;
    font-size: 12px;
}

.comma {
    font-size: 16px;
    padding-bottom: 8px;
}

.decimals {
    flex-direction: column;
    align-items: flex-end;
    gap: 0;
    padding-right: 1px;
    font-family: "Liberation Sans", sans-serif;
    font-size: 8px;
    font-weight: bold;
    line-height: 10px;
}

.sigma {
    width: 16px;
    font-size: 15px;
    font-weight: bold;
    color: #555;
}

/* Formula bar */
.formula-bar {
    display: flex;
    flex: none;
    height: 23px;
    margin: 2px 0 3px;
    border: solid #8f949c;
    border-width: 1px 0;
}

.name-box {
    width: 160px;
    position: relative;
}

.name-box::after {
    content: "";
    position: absolute;
    right: 6px;
    top: 9px;
    border: 4px solid transparent;
    border-top-color: #111;
    border-bottom: none;
}

.name-box input {
    width: 140px;
    height: 21px;
}

.fx {
    display: flex;
    justify-content: space-between;
    align-items: center;
    width: 85px;
    padding: 0 6px;
    background-color: #dfe3e9;
    border: solid #8f949c;
    border-width: 0 1px;
    border-radius: 11px 0 0 11px;
    font: italic bold 15px "Liberation Serif", serif;
}

.fx small {
    font-size: 11px;
}

.knob {
    width: 9px;
    height: 9px;
    border-radius: 50%;
    background: linear-gradient(#aab0b8, #f4f6f8);
}

.formula {
    flex: 1;
}

.expand {
    width: 16px;
    border-left: 1px solid #b0b4bb;
    background-color: #eef0f3;
}

/* Sheet */
.workspace {
    display: flex;
    flex: 1;
    min-height: 0;
    border-top: 1px solid #6e737b;
}

.canvas {
    flex: 1;
    position: relative;
    overflow: hidden;
    font-family: Lato, sans-serif;
}

.sheet {
    width: 100%;
    table-layout: fixed;
    border-collapse: separate;
    border-spacing: 0;
    font-size: 13px;
    line-height: 19px;
}

.col-head { width: 26px; }
.col-a { width: 92px; }
.col-b { width: 108px; }
.col-std { width: 64px; }

.sheet th,
.sheet td {
    height: 20px;
    border: solid #d6d8dc;
    border-width: 0 1px 1px 0;
    white-space: nowrap;
}

.sheet th {
    border-color: #9ba0a8;
    background-color: #dfe3e9;
    font-weight: normal;
}

/* column letters stay above the floating objects */
.sheet thead th {
    position: relative;
    z-index: 1;
}

.sheet tbody th {
    background: linear-gradient(to right, #f6fafd, #dfe3e9 60%);
}

.sheet .corner {
    background: linear-gradient(135deg, #e8ecf1 65%, #adb3bc 65%);
}

.sheet td {
    padding: 0 2px;
}

.sheet td:nth-child(3) {
    text-align: right;
}

.sheet .pivot td:nth-child(2),
.sheet .pivot td:nth-child(3) {
    border-color: white;
}

.sheet .pivot td:nth-child(3) {
    border-right-color: #d6d8dc;
}

.sheet .pivot-head td:nth-child(2),
.sheet .pivot-head td:nth-child(3),
.sheet .total td:nth-child(2),
.sheet .total td:nth-child(3) {
    background-color: #d8e4f1;
    border-color: #d8e4f1;
    font-size: 14px;
    font-weight: bold;
}

.sheet .pivot-head td:nth-child(2),
.sheet .pivot-head td:nth-child(3),
.sheet .last td:nth-child(2),
.sheet .last td:nth-child(3) {
    border-bottom-color: #7d9dce;
}

.sheet .pivot-head td:nth-child(3) {
    text-align: left;
}

.sheet .indented {
    padding-right: 7px;
}

.sheet .rest {
    border-right: none;
    background: repeating-linear-gradient(to right, transparent 0 63px, #d6d8dc 63px 64px);
}

.label-cell {
    display: flex;
    align-items: center;
    justify-content: space-between;
}

.sort {
    width: 16px;
    height: 16px;
    border: 1px solid #a5a9b0;
    background-color: #f8f9fb;
    line-height: 8px;
}

/* Slicers */
.slicer {
    position: absolute;
    padding: 0 8px;
    background-color: white;
    border: 1px solid #3c6296;
    font-size: 14px;
}

.region {
    left: 249px;
    top: 42px;
    width: 185px;
    height: 170px;
}

.city {
    left: 255px;
    top: 247px;
    width: 192px;
    height: 220px;
}

.slicer h2 {
    display: flex;
    justify-content: space-between;
    align-items: center;
    height: 26px;
    margin-bottom: 5px;
    border-bottom: 1px solid #3c6296;
    font-size: 14px;
}

.slicer h2 svg {
    width: 16px;
    height: 14px;
    margin-right: 2px;
}

.slicer-list {
    flex: 1;
    display: flex;
    flex-direction: column;
    gap: 3px;
}

.slicer-list button {
    height: 25px;
    padding: 0 0 2px 8px;
    border: 1px solid #76797f;
    border-radius: 4px;
    background: linear-gradient(to right, #aac1e0, #b5cbea 30%, #abc0df);
    text-align: left;
}

.slicer-scroll {
    display: flex;
    gap: 5px;
}

.slicer-bar {
    display: flex;
    flex-direction: column;
    align-items: center;
    justify-content: space-between;
    width: 17px;
    padding-top: 6px;
    background-color: #f0f0f0;
}

.slicer-thumb {
    width: 16px;
    height: 66px;
    background-color: #c3c3c3;
}

/* Dashboard */
.dashboard {
    position: absolute;
    left: 569px;
    top: 20px;
    width: 656px;
    height: 402px;
    background-color: #4e7ec6;
    border: solid #0d1a30;
    border-width: 0 3px 3px;
    box-shadow: inset 0 0 50px 4px #2a5088, inset 40px 20px 70px #2a5088, 1px 2px 3px rgba(0, 0, 0, 0.5);
    display: flex;
    flex-direction: column;
    align-items: center;
}

.dash-title {
    align-self: stretch;
    height: 34px;
    margin-top: 9px;
    border: solid #222;
    border-width: 1px 0;
    background-color: white;
    font-size: 26px;
    line-height: 32px;
    text-align: center;
}

.chart {
    height: 166px;
    margin: 96px 0 0 8px;
    border-radius: 6px;
    box-shadow: 0 0 45px 10px #2a5088;
}

.chart svg {
    display: block;
}

.chart-title {
    font-size: 22px;
    font-weight: bold;
}

.chart-values {
    font-size: 12px;
    text-anchor: middle;
}

.chart-labels {
    font-size: 12px;
    text-anchor: end;
}

.dash-total {
    margin-top: 54px;
    padding-left: 8px;
    font-size: 29px;
    font-weight: bold;
    line-height: 34px;
}

.handle {
    position: absolute;
    width: 8px;
    height: 8px;
    margin: -4px;
    border: 1px solid #4b6f94;
    background-color: #daf3f8;
}

.round {
    border-color: #222;
    border-radius: 50%;
}

.left { left: 0; }
.middle { left: 50%; }
.right { left: 100%; }
.top { top: 0; }
.title-top { top: 9px; }
.title-mid { top: 26px; }
.title-end { top: 43px; }
.center { top: 200px; }
.bottom { top: 100%; }

/* Mini toolbar and menus */
.mini-toolbar {
    position: absolute;
    left: 598px;
    top: 38px;
    width: 238px;
    padding: 1px;
    border: 1px solid #a7abb3;
    border-radius: 2px;
    background-color: white;
    box-shadow: 2px 2px 3px rgba(0, 0, 0, 0.3);
    font-family: "Open Sans", sans-serif;
}

.mini-toolbar .row + .row {
    margin-top: 3px;
}

.mini-font { width: 63px; }
.mini-size { width: 40px; margin-left: -1px; }

.menu {
    position: absolute;
    border: 1px solid #a7abb3;
    background: linear-gradient(to right, white 24px, #e2e4e7 24px 25px, white 25px);
    box-shadow: 3px 3px 4px rgba(0, 0, 0, 0.25);
    font-family: "Open Sans", sans-serif;
}

.context-menu {
    left: 598px;
    top: 103px;
    width: 167px;
    padding: 0 1px 2px;
}

.sub-menu {
    left: 765px;
    top: 201px;
    width: 105px;
}

.menu > button,
.menu-head {
    display: flex;
    align-items: center;
    width: 100%;
    height: 22px;
    padding: 0 8px 0 4px;
    gap: 13px;
    white-space: nowrap;
}

.menu .menu-head {
    height: 19px;
    background: linear-gradient(to right, transparent 26px, #eceff3 26px, white);
    font-weight: bold;
}

.menu > .hot {
    padding: 0 7px 0 3px;
    border: 1px solid #e6b93c;
    border-radius: 3px;
    background: linear-gradient(#fff6d4, #fde38a 50%, #fbd65c 55%, #fff0a8);
}

.paste-row {
    height: 29px;
    padding: 2px 0 0 29px;
}

.paste-option {
    width: 24px;
    height: 25px;
    border: 1px solid #c99a4c;
    background-color: #fbdfae;
}

.paste-option svg {
    display: block;
    margin: 0 auto;
}

.menu hr {
    height: 1px;
    margin: 1px 2px 2px 33px;
    border: none;
    border-top: 1px dashed #bbb;
}

.arrow {
    margin-left: auto;
    border: 4px solid transparent;
    border-left: 5px solid #555;
    border-right: none;
    position: relative;
}

.split-arrow::before {
    content: "";
    position: absolute;
    left: -15px;
    top: -7px;
    height: 14px;
    border-left: 1px solid #8a919c;
}

/* Scrollbar */
.scrollbar {
    display: flex;
    flex-direction: column;
    width: 16px;
    margin-right: 4px;
    border: solid #7a7f87;
    border-width: 0 1px;
}

.split-box {
    height: 7px;
    border: 1px solid #555;
    background-color: white;
}

.scroll-up {
    height: 18px;
    border-bottom: 1px solid #888;
    background-color: #e6e9ed;
}

.scroll-up::after {
    content: "";
    display: inline-block;
    border: 4px solid transparent;
    border-bottom: 5px solid #111;
    border-top: none;
}

.scroll-thumb {
    flex: 1;
    display: flex;
    justify-content: center;
    align-items: center;
    padding-top: 80px;
    background: linear-gradient(to right, #f6f8fa, #d8dce2);
}

.scroll-thumb i {
    width: 8px;
    height: 7px;
    background: repeating-linear-gradient(#555 0 1px, transparent 1px 2px);
}
```
